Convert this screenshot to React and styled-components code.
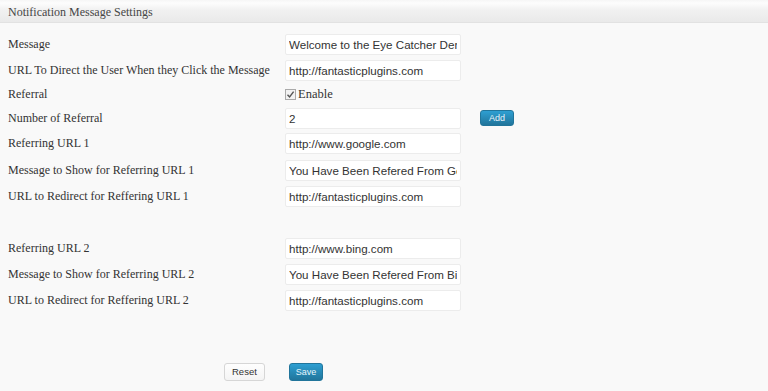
import React from "react";
import styled, { createGlobalStyle } from "styled-components";

const GlobalStyle = createGlobalStyle`
  html, body {
    margin: 0;
    padding: 0;
    background: #f9f9f9;
  }
`;

const rows = [
  { label: "Message", value: "Welcome to the Eye Catcher Demo", h: 26 },
  { label: "URL To Direct the User When they Click the Message", value: "http://fantasticplugins.com", h: 26 },
  { label: "Referral", check: true, h: 23 },
  { label: "Number of Referral", value: "2", add: true, h: 24 },
  { label: "Referring URL 1", value: "http://www.google.com", h: 27 },
  { label: "Message to Show for Referring URL 1", value: "You Have Been Refered From Google", h: 26 },
  { label: "URL to Redirect for Reffering URL 1", value: "http://fantasticplugins.com", h: 26 },
  { spacer: true, h: 26 },
  { label: "Referring URL 2", value: "http://www.bing.com", h: 26 },
  { label: "Message to Show for Referring URL 2", value: "You Have Been Refered From Bing", h: 26 },
  { label: "URL to Redirect for Reffering URL 2", value: "http://fantasticplugins.com", h: 27 },
];

function App() {
  return (
    <Page>
      <GlobalStyle />
      <Header>Notification Message Settings</Header>
      <Form>
        {rows.map((r, i) => (
          <Row key={i} $h={r.h}>
            <Label>{r.label}</Label>
            <Field>
              {r.check ? (
                <CheckLabel>
                  <Check>
                    <svg width="9" height="9" viewBox="0 0 9 9">
                      <path d="M1.5 4.8 L3.6 7 L7.6 1.6" fill="none" stroke="#555" strokeWidth="1.4" />
                    </svg>
                  </Check>
                  Enable
                </CheckLabel>
              ) : r.spacer ? null : (
                <TextInput defaultValue={r.value} readOnly />
              )}
              {r.add && <BlueButton $small>Add</BlueButton>}
            </Field>
          </Row>
        ))}
      </Form>
      <Actions>
        <GreyButton>Reset</GreyButton>
        <BlueButton>Save</BlueButton>
      </Actions>
    </Page>
  );
}

export default App;

const Page = styled.div`
  width: 768px;
  height: 391px;
  background: #f9f9f9;
  overflow: hidden;
`;

const Header = styled.div`
  height: 23px;
  box-sizing: border-box;
  padding: 5px 8px 0;
  background: linear-gradient(to bottom, #f6f6f6 0px, #fdfdfd 3px, #f1f1f1 10px, #e9e9e9 23px);
  border-bottom: 1px solid #e2e2e2;
  font-family: "Liberation Serif", serif;
  font-size: 12px;
  color: #464646;
`;

const Form = styled.div`
  display: flex;
  flex-direction: column;
  padding-top: 8px;
`;

const Row = styled.div`
  display: grid;
  grid-template-columns: 285px 1fr;
  align-items: center;
  height: ${(p) => p.$h}px;
`;

const Label = styled.div`
  padding-left: 8px;
  font-family: "Liberation Serif", serif;
  font-size: 12px;
  color: #333;
  white-space: nowrap;
`;

const Field = styled.div`
  display: flex;
  align-items: center;
  gap: 19px;
`;

const TextInput = styled.input`
  box-sizing: border-box;
  width: 176px;
  height: 21px;
  padding: 0 3px;
  border: 1px solid #ececec;
  border-radius: 2px;
  background: #fff;
  font-family: "Liberation Sans", Arial, sans-serif;
  font-size: 11.6px;
  color: #333;
  outline: none;
`;

const CheckLabel = styled.label`
  display: flex;
  align-items: center;
  gap: 2px;
  font-family: "Liberation Serif", serif;
  font-size: 12.5px;
  color: #333;
`;

const Check = styled.span`
  display: inline-flex;
  align-items: center;
  justify-content: center;
  width: 9px;
  height: 9px;
  border: 1px solid #aaa;
  background: #f2f2f2;
`;

const BlueButton = styled.button`
  box-sizing: border-box;
  height: ${(p) => (p.$small ? 16 : 18)}px;
  padding: 0 ${(p) => (p.$small ? 8 : 6)}px;
  border: 1px solid #21759b;
  border-radius: 3px;
  background: linear-gradient(to bottom, #2e9fd2, #21759b);
  color: #e8f4fa;
  font-family: "Liberation Sans", Arial, sans-serif;
  font-size: 9px;
  line-height: 1;
`;

const GreyButton = styled.button`
  box-sizing: border-box;
  height: 18px;
  padding: 0 7px;
  border: 1px solid #d6d6d6;
  border-radius: 3px;
  background: linear-gradient(to bottom, #fefefe, #f4f4f4);
  color: #333;
  font-family: "Liberation Sans", Arial, sans-serif;
  font-size: 9.5px;
  line-height: 1;
`;

const Actions = styled.div`
  display: flex;
  align-items: center;
  gap: 24px;
  padding: 49px 0 0 224px;
`;
